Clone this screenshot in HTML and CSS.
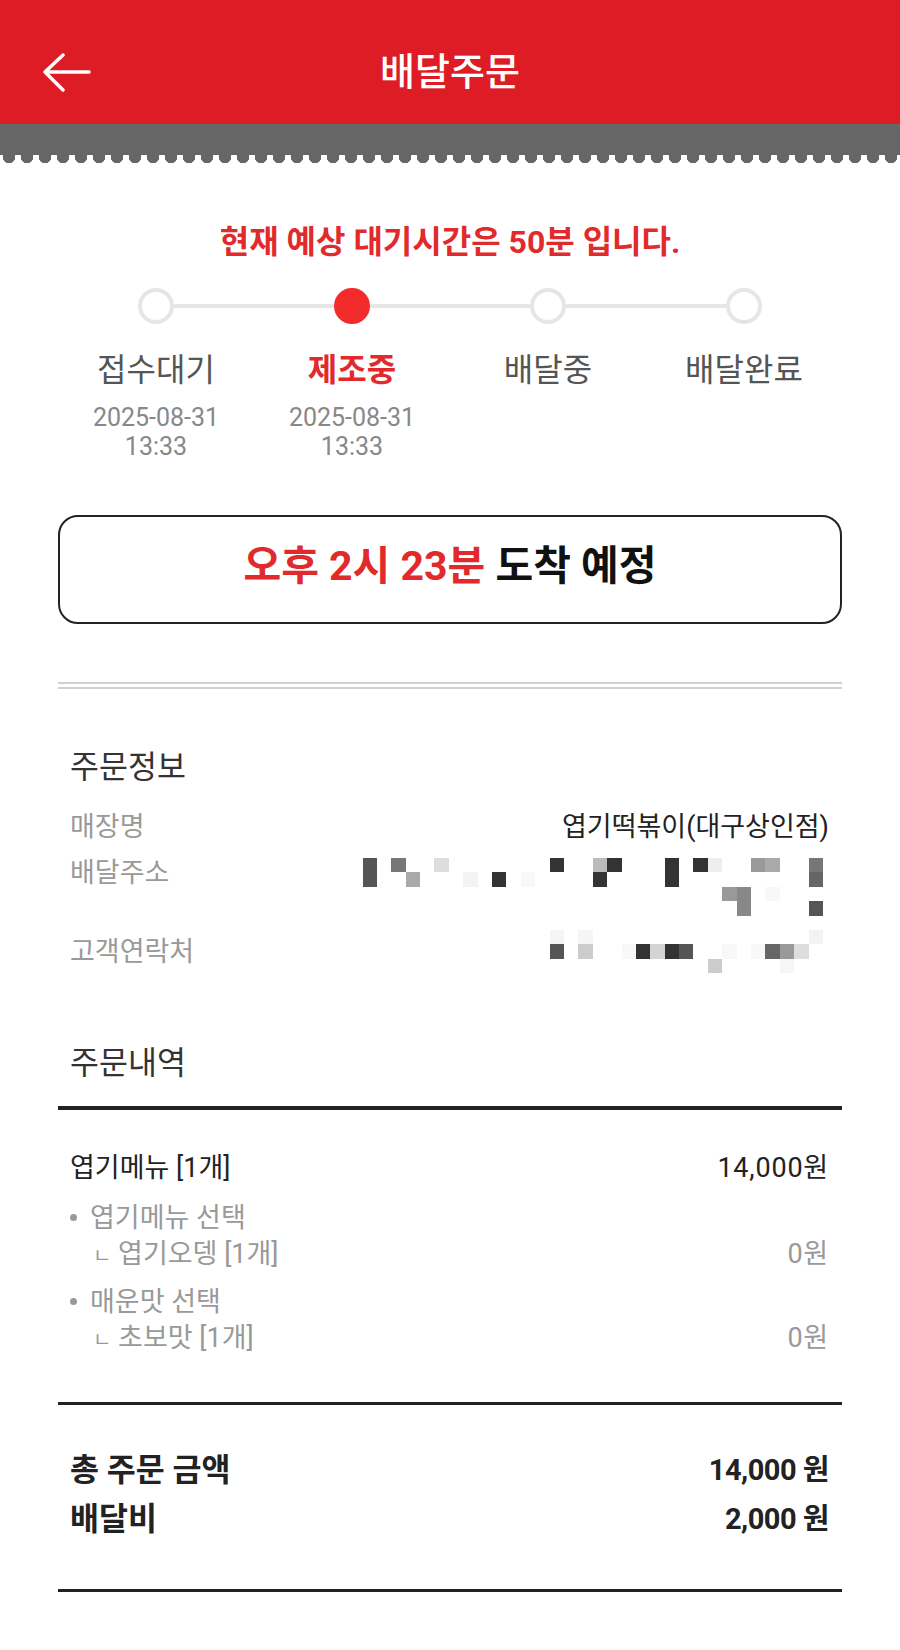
FILE: index.html
```html
<!DOCTYPE html>
<html lang="ko">
<head>
<meta charset="utf-8">
<title>배달주문</title>
<link rel="stylesheet" href="styles.css">
</head>
<body>
<header class="header">
  <div class="back">
    <svg width="48" height="40" viewBox="0 0 48 40" fill="none" stroke="#fff" stroke-width="3.5" stroke-linecap="round" stroke-linejoin="round">
      <path d="M2 20 H46 M20 3 L2 20 L20 38"/>
    </svg>
  </div>
  <div class="title">배달주문</div>
  <div></div>
</header>
<div class="band"></div>

<div class="wait">현재 예상 대기시간은 50분 입니다.</div>

<div class="stepper">
  <div class="step">
    <span class="dot"></span>
    <div class="label">접수대기</div>
    <div class="date">2025-08-31<br>13:33</div>
  </div>
  <div class="step">
    <span class="dot active"></span>
    <div class="label active">제조중</div>
    <div class="date">2025-08-31<br>13:33</div>
  </div>
  <div class="step">
    <span class="dot"></span>
    <div class="label">배달중</div>
  </div>
  <div class="step">
    <span class="dot"></span>
    <div class="label">배달완료</div>
  </div>
</div>

<div class="eta"><span class="red">오후 2시 23분</span>&nbsp;도착 예정</div>

<div class="dline"></div>

<section class="info">
  <h2 class="sec-title">주문정보</h2>
  <div class="row first">
    <span class="k">매장명</span>
    <span class="v">엽기떡볶이(대구상인점)</span>
  </div>
  <div class="row addr">
    <span class="k">배달주소</span>
    <div class="mosaic four">
      <i style="grid-area:1/1/3/2;background:#555"></i>
      <i style="grid-area:1/3/2/4;background:#777"></i>
      <i style="grid-area:1/6/2/7;background:#ddd"></i>
      <i style="grid-area:1/14/2/15;background:#333"></i>
      <i style="grid-area:1/17/2/18;background:#bbb"></i>
      <i style="grid-area:1/18/2/19;background:#333"></i>
      <i style="grid-area:1/22/3/23;background:#333"></i>
      <i style="grid-area:1/24/2/25;background:#333"></i>
      <i style="grid-area:1/25/2/26;background:#eee"></i>
      <i style="grid-area:1/28/2/29;background:#999"></i>
      <i style="grid-area:1/29/2/30;background:#aaa"></i>
      <i style="grid-area:1/32/2/33;background:#777"></i>
      <i style="grid-area:2/4/3/5;background:#aaa"></i>
      <i style="grid-area:2/8/3/9;background:#f3f3f3"></i>
      <i style="grid-area:2/10/3/11;background:#333"></i>
      <i style="grid-area:2/12/3/13;background:#f8f8f8"></i>
      <i style="grid-area:2/17/3/18;background:#333"></i>
      <i style="grid-area:2/32/3/33;background:#666"></i>
      <i style="grid-area:3/26/4/27;background:#999"></i>
      <i style="grid-area:3/27/4/28;background:#888"></i>
      <i style="grid-area:3/29/4/30;background:#f8f8f8"></i>
      <i style="grid-area:4/27/5/28;background:#888"></i>
      <i style="grid-area:4/32/5/33;background:#555"></i>
    </div>
  </div>
  <div class="row phone">
    <span class="k">고객연락처</span>
    <div class="mosaic three">
      <i style="grid-area:1/14/2/15;background:#f5f5f5"></i>
      <i style="grid-area:1/16/2/17;background:#f5f5f5"></i>
      <i style="grid-area:1/32/2/33;background:#f3f3f3"></i>
      <i style="grid-area:2/14/3/15;background:#555"></i>
      <i style="grid-area:2/16/3/17;background:#ccc"></i>
      <i style="grid-area:2/19/3/20;background:#f8f8f8"></i>
      <i style="grid-area:2/20/3/21;background:#333"></i>
      <i style="grid-area:2/21/3/22;background:#d4d4d4"></i>
      <i style="grid-area:2/22/3/23;background:#333"></i>
      <i style="grid-area:2/23/3/24;background:#555"></i>
      <i style="grid-area:2/26/3/27;background:#f8f8f8"></i>
      <i style="grid-area:2/28/3/29;background:#f8f8f8"></i>
      <i style="grid-area:2/29/3/30;background:#666"></i>
      <i style="grid-area:2/30/3/31;background:#999"></i>
      <i style="grid-area:2/31/3/32;background:#ddd"></i>
      <i style="grid-area:3/25/4/26;background:#ccc"></i>
      <i style="grid-area:3/30/4/31;background:#f6f6f6"></i>
    </div>
  </div>

  <h2 class="sec-title order">주문내역</h2>
  <div class="rule thick"></div>

  <div class="item">
    <span>엽기메뉴 [1개]</span>
    <span class="price">14,000원</span>
  </div>
  <div class="opt">
    <div class="opt-head"><span class="bullet"></span>엽기메뉴 선택</div>
    <div class="opt-sub"><span><span class="ieung">ㄴ</span> 엽기오뎅 [1개]</span><span class="price">0원</span></div>
  </div>
  <div class="opt second">
    <div class="opt-head"><span class="bullet"></span>매운맛 선택</div>
    <div class="opt-sub"><span><span class="ieung">ㄴ</span> 초보맛 [1개]</span><span class="price">0원</span></div>
  </div>

  <div class="rule mid"></div>

  <div class="totals">
    <div class="tot"><span>총 주문 금액</span><span class="amt">14,000 원</span></div>
    <div class="tot"><span>배달비</span><span class="amt">2,000 원</span></div>
  </div>

  <div class="rule last"></div>
</section>
</body>
</html>
```

FILE: styles.css
```css
* {
  box-sizing: border-box;
  margin: 0;
  padding: 0;
}

body {
  width: 900px;
  height: 1650px;
  overflow: hidden;
  background: #fff;
  font-family: Roboto, "Noto Sans CJK KR", sans-serif;
  color: #222;
}

.header {
  height: 124px;
  padding-top: 20px;
  background: #dd1c25;
  display: grid;
  grid-template-columns: 1fr auto 1fr;
  align-items: center;
}

.back {
  padding-left: 43px;
  display: flex;
}

.title {
  color: #fff;
  font-size: 38px;
  font-weight: 500;
  line-height: 1;
}

.band {
  height: 39px;
  background:
    radial-gradient(circle at 9px 5px, #666 0 6px, transparent 6.5px) 0 28px / 18px 11px repeat-x,
    radial-gradient(circle at 9px 9px, #fff 0 6px, transparent 6.5px) 9px 28px / 18px 11px repeat-x,
    linear-gradient(#666, #666) 0 0 / 100% 34px no-repeat;
}

.wait {
  margin-top: 59px;
  text-align: center;
  font-size: 32px;
  line-height: 40px;
  font-weight: 700;
  color: #e12a2c;
}

.stepper {
  position: relative;
  margin: 26px 0 0 58px;
  width: 784px;
  display: grid;
  grid-template-columns: repeat(4, 1fr);
}

.stepper::before {
  content: "";
  position: absolute;
  left: 98px;
  right: 98px;
  top: 16px;
  height: 4px;
  background: #e6e6e6;
}

.step {
  display: flex;
  flex-direction: column;
  align-items: center;
}

.dot {
  position: relative;
  z-index: 1;
  width: 36px;
  height: 36px;
  border-radius: 50%;
  border: 4px solid #e6e6e6;
  background: #fff;
}

.dot.active {
  background: #f22b2b;
  border-color: #f22b2b;
}

.label {
  margin-top: 26px;
  font-size: 32px;
  line-height: 40px;
  color: #555;
}

.label.active {
  color: #e12a2c;
  font-weight: 700;
}

.date {
  margin-top: 13px;
  font-size: 25px;
  line-height: 29px;
  color: #888;
  text-align: center;
}

.eta {
  margin: 54px 58px 0;
  height: 109px;
  padding-bottom: 16px;
  border: 2px solid #222;
  border-radius: 20px;
  display: flex;
  justify-content: center;
  align-items: center;
  font-size: 41px;
  font-weight: 700;
  color: #111;
}

.eta .red {
  color: #e12a2c;
}

.dline {
  margin: 58px 58px 0;
  height: 7px;
  border-top: 2px solid #d0d0d0;
  border-bottom: 2px solid #d0d0d0;
}

.info {
  margin: 0 58px;
}

.sec-title {
  margin-top: 59px;
  padding-left: 12px;
  font-size: 31.5px;
  line-height: 40px;
  font-weight: 400;
  color: #333;
}

.sec-title.order {
  margin-top: 69px;
}

.row {
  display: flex;
  justify-content: space-between;
  align-items: flex-start;
  padding: 0 13px 0 12px;
  font-size: 27px;
  line-height: 46px;
}

.row.first {
  margin-top: 16px;
}

.k {
  color: #999;
}

.v {
  color: #222;
}

.mosaic {
  display: grid;
  grid-template-columns: repeat(32, 14.4px);
  margin-right: 6px;
}

.mosaic.four {
  grid-template-rows: repeat(4, 14.4px);
  margin-top: 8px;
  margin-bottom: 13px;
}

.mosaic.three {
  grid-template-rows: repeat(3, 14.4px);
  margin-top: 1.5px;
}

.rule {
  background: #222;
}

.rule.thick {
  margin-top: 22px;
  height: 4px;
}

.item {
  margin-top: 40px;
  padding: 0 13px 0 12px;
  display: flex;
  justify-content: space-between;
  font-size: 27px;
  line-height: 36px;
  color: #222;
}

.price {
  letter-spacing: 0.8px;
}

.opt {
  margin-top: 14px;
  padding: 0 13px 0 12px;
  font-size: 27px;
  line-height: 36px;
  color: #999;
}

.opt.second {
  margin-top: 10px;
}

.opt-head {
  display: flex;
  align-items: center;
}

.bullet {
  width: 20px;
  display: flex;
  align-items: center;
}

.bullet::before {
  content: "";
  width: 7px;
  height: 7px;
  border-radius: 50%;
  background: #999;
}

.opt-sub {
  display: flex;
  justify-content: space-between;
  padding-left: 23px;
}

.ieung {
  font-size: 20px;
}

.rule.mid {
  margin-top: 44px;
  height: 3px;
}

.totals {
  margin-top: 41.5px;
  padding: 0 13px 0 12px;
}

.tot {
  display: flex;
  justify-content: space-between;
  font-size: 31.5px;
  line-height: 49px;
  font-weight: 700;
  color: #222;
}

.amt {
  font-size: 29px;
  letter-spacing: -0.5px;
}

.rule.last {
  margin-top: 44.5px;
  height: 3px;
}
```
